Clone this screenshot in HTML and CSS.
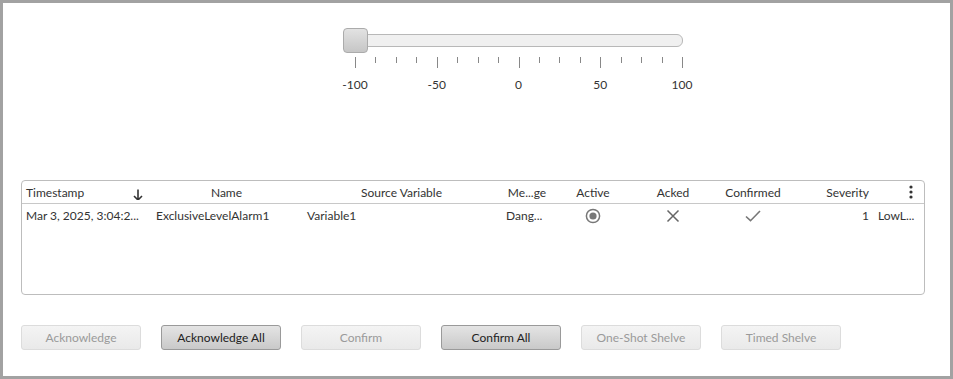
FILE: index.html
```html
<!DOCTYPE html>
<html>
<head>
<meta charset="utf-8">
<link rel="stylesheet" href="styles.css">
</head>
<body>
<div class="frame">
  <div class="slider-wrap">
    <div class="slider">
      <div class="track"></div>
      <div class="thumb"></div>
    </div>
    <div class="ticks">
      <span class="tick major"></span><span class="tick"></span><span class="tick"></span><span class="tick"></span>
      <span class="tick major"></span><span class="tick"></span><span class="tick"></span><span class="tick"></span>
      <span class="tick major"></span><span class="tick"></span><span class="tick"></span><span class="tick"></span>
      <span class="tick major"></span><span class="tick"></span><span class="tick"></span><span class="tick"></span>
      <span class="tick major"></span>
    </div>
    <div class="labels">
      <span>-100</span><span>-50</span><span>0</span><span>50</span><span>100</span>
    </div>
  </div>

  <div class="grid">
    <div class="row head">
      <div class="cell left ts">Timestamp
        <svg class="sort" width="10" height="12" viewBox="0 0 10 12"><path d="M5 0.5V11M1 7l4 4 4-4" fill="none" stroke="#333" stroke-width="1.6"/></svg>
      </div>
      <div class="cell center">Name</div>
      <div class="cell center">Source Variable</div>
      <div class="cell center">Me...ge</div>
      <div class="cell center">Active</div>
      <div class="cell center">Acked</div>
      <div class="cell center">Confirmed</div>
      <div class="cell right">Severity</div>
      <div class="cell menu">
        <svg width="4" height="14" viewBox="0 0 4 14"><circle cx="2" cy="2" r="1.6" fill="#333"/><circle cx="2" cy="7" r="1.6" fill="#333"/><circle cx="2" cy="12" r="1.6" fill="#333"/></svg>
      </div>
    </div>
    <div class="row data">
      <div class="cell left">Mar 3, 2025, 3:04:2...</div>
      <div class="cell left">ExclusiveLevelAlarm1</div>
      <div class="cell left">Variable1</div>
      <div class="cell left">Dang...</div>
      <div class="cell center">
        <svg width="16" height="16" viewBox="0 0 16 16"><circle cx="8" cy="8" r="6.6" fill="none" stroke="#777" stroke-width="1.5"/><circle cx="8" cy="8" r="3.6" fill="#777"/></svg>
      </div>
      <div class="cell center">
        <svg width="14" height="14" viewBox="0 0 14 14"><path d="M1.5 1.5l11 11M12.5 1.5l-11 11" stroke="#666" stroke-width="1.5" fill="none"/></svg>
      </div>
      <div class="cell center">
        <svg width="16" height="12" viewBox="0 0 16 12"><path d="M1 6.5l4.5 4.2L15 1" stroke="#777" stroke-width="1.6" fill="none"/></svg>
      </div>
      <div class="cell right">1</div>
      <div class="cell left">LowL...</div>
    </div>
  </div>

  <div class="buttons">
    <button class="btn disabled">Acknowledge</button>
    <button class="btn">Acknowledge All</button>
    <button class="btn disabled">Confirm</button>
    <button class="btn">Confirm All</button>
    <button class="btn disabled">One-Shot Shelve</button>
    <button class="btn disabled">Timed Shelve</button>
  </div>
</div>
</body>
</html>
```

FILE: styles.css
```css
html, body {
  margin: 0;
  padding: 0;
  background: #fff;
}
body {
  font-family: Lato, "Liberation Sans", sans-serif;
  font-size: 12px;
  color: #333;
}
.frame {
  box-sizing: border-box;
  width: 953px;
  height: 379px;
  border: 3px solid #a2a2a2;
  display: flex;
  flex-direction: column;
}
.slider-wrap {
  margin-left: 340px;
  margin-top: 25px;
  width: 340px;
  display: flex;
  flex-direction: column;
}
.slider {
  position: relative;
  height: 24px;
  display: flex;
  align-items: center;
}
.track {
  box-sizing: border-box;
  width: 340px;
  height: 13px;
  border: 1px solid #b8b8b8;
  border-radius: 6px;
  background: #f0f0f0;
}
.thumb {
  position: absolute;
  left: 0;
  top: 0;
  box-sizing: border-box;
  width: 25px;
  height: 25px;
  border: 1px solid #ababab;
  border-radius: 4px;
  background: linear-gradient(#e2e2e2, #c6c6c6);
}
.ticks {
  margin-top: 5px;
  margin-left: 12px;
  width: 328px;
  display: flex;
  justify-content: space-between;
  align-items: flex-start;
  height: 11px;
}
.tick {
  width: 1px;
  height: 6px;
  background: #888;
}
.tick.major {
  height: 11px;
}
.labels {
  margin-top: 10px;
  margin-left: -8px;
  width: 367px;
  display: flex;
  justify-content: space-between;
  line-height: 14px;
  color: #333;
}
.labels span {
  width: 40px;
  text-align: center;
}
.grid {
  margin-top: 88px;
  margin-left: 18px;
  box-sizing: border-box;
  width: 904px;
  height: 115px;
  border: 1px solid #bdbdbd;
  border-radius: 4px;
}
.row {
  display: grid;
  grid-template-columns: 129px 151px 199px 52px 80px 80px 80px 81px 50px;
  height: 22px;
  align-items: center;
}
.row.head {
  border-bottom: 1px solid #c8c8c8;
}
.row.data {
  height: 23px;
}
.cell {
  padding: 0 5px;
  white-space: nowrap;
  overflow: hidden;
  display: flex;
  align-items: center;
}
.cell.left { justify-content: flex-start; }
.cell.center { justify-content: center; }
.cell.right { justify-content: flex-end; }
.cell.ts {
  position: relative;
  padding-left: 4px;
}
.sort {
  position: absolute;
  right: 8px;
  top: 4px;
}
.cell.menu {
  justify-content: flex-end;
  padding-right: 11px;
}
.row.data .cell:first-child { padding-left: 4px; }
.row.data .cell:last-child { padding-left: 4px; }
.buttons {
  margin-top: 30px;
  margin-left: 18px;
  display: flex;
  gap: 20px;
}
.btn {
  box-sizing: border-box;
  width: 120px;
  height: 25px;
  padding: 0;
  font-family: Lato, "Liberation Sans", sans-serif;
  font-size: 12px;
  color: #222;
  border: 1px solid #9a9a9a;
  border-radius: 3px;
  background: linear-gradient(#e4e4e4, #c9c9c9);
}
.btn.disabled {
  color: #9a9a9a;
  border-color: #dcdcdc;
  background: linear-gradient(#f4f4f4, #e9e9e9);
}
```
